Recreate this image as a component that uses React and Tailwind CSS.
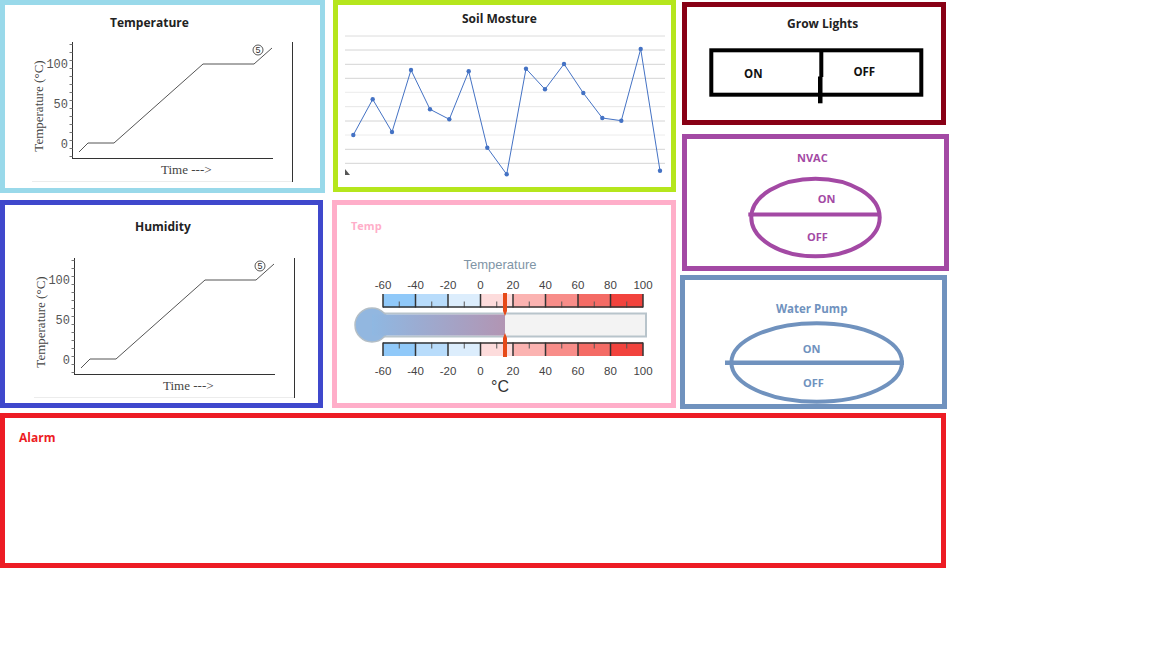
const soilPoints = [
  [353.3, 135], [372.7, 99.3], [392, 132], [411, 70], [430, 109.3], [449.3, 119.3],
  [468.7, 71.3], [487.3, 147.7], [506.7, 174.3], [526, 68.7], [545, 89.3], [564, 64],
  [583.3, 93], [602.3, 118], [621.3, 120.7], [640.7, 49], [660, 170.7],
];

const gridLines = [
  [36, "#dcdcdc"], [50, "#d4d4d4"], [64.3, "#d4d4d4"], [78.3, "#d4d4d4"], [92.3, "#ececec"],
  [106.7, "#e6e6e6"], [121, "#d4d4d4"], [135, "#ececec"], [149.3, "#d4d4d4"], [163.3, "#d4d4d4"],
];

const scaleColors = ["#90c9f9", "#b8dcfb", "#dcedfc", "#fddcdc", "#fbb3b1", "#f88d89", "#f46b65", "#f2433d"];
const scaleLabels = ["-60", "-40", "-20", "0", "20", "40", "60", "80", "100"];

// the same phase-change chart is used in both left panels
function CurveChart() {
  const ticks = [];
  for (let y = 44; y <= 156; y += 8) ticks.push(y);
  return (
    <g>
      <line x1="32" y1="181.5" x2="292" y2="181.5" stroke="#ececec" />
      <line x1="72.5" y1="42" x2="72.5" y2="159" stroke="#333" />
      <line x1="72" y1="158.5" x2="273" y2="158.5" stroke="#333" />
      <line x1="292.5" y1="42" x2="292.5" y2="182" stroke="#333" />
      {ticks.map((y) => (
        <line key={y} x1="69.5" y1={y + 0.5} x2="72.5" y2={y + 0.5} stroke="#777" />
      ))}
      <g fontFamily="'Liberation Mono', monospace" fontSize="12" fill="#555" textAnchor="end">
        <text x="68" y="68">100</text>
        <text x="68" y="107.5">50</text>
        <text x="68" y="148">0</text>
      </g>
      <text
        x="38"
        y="106"
        transform="rotate(-90 38 106)"
        textAnchor="middle"
        dominantBaseline="central"
        fontFamily="'Liberation Serif', serif"
        fontSize="13"
        fill="#444"
      >
        Temperature (°C)
      </text>
      <text x="161" y="174" fontFamily="'Liberation Serif', serif" fontSize="13" fill="#444">
        Time ---&gt;
      </text>
      <polyline
        points="79,152 88,143 114,143 203,64 254,64 272,48"
        fill="none"
        stroke="#555"
        strokeWidth="1"
      />
      <circle cx="258" cy="50" r="5" fill="white" stroke="#444" strokeWidth="0.9" />
      <text x="258" y="53.2" textAnchor="middle" fontFamily="'Liberation Sans', sans-serif" fontSize="9" fill="#333">
        5
      </text>
    </g>
  );
}

function SoilChart() {
  return (
    <g>
      {gridLines.map(([y, c]) => (
        <line key={y} x1="345" y1={y} x2="665" y2={y} stroke={c} strokeWidth="1" />
      ))}
      <polygon points="345,169 350,175 345,175" fill="#555" />
      <polyline
        points={soilPoints.map((p) => p.join(",")).join(" ")}
        fill="none"
        stroke="#4472c4"
        strokeWidth="1"
      />
      {soilPoints.map(([x, y]) => (
        <circle key={x} cx={x} cy={y} r="2.2" fill="#4472c4" />
      ))}
    </g>
  );
}

function ScaleBar({ y, ticksFromTop }) {
  const h = 13.5;
  return (
    <g>
      {scaleColors.map((c, i) => (
        <rect key={c} x={383 + i * 32.5} y={y} width="32.5" height={h} fill={c} />
      ))}
      {scaleLabels.map((l, i) => (
        <line key={l} x1={383 + i * 32.5} y1={y} x2={383 + i * 32.5} y2={y + h} stroke="#333" strokeWidth="1.5" />
      ))}
      {scaleColors.map((c, i) => (
        <line
          key={"m" + c}
          x1={399.25 + i * 32.5}
          y1={ticksFromTop ? y : y + h - 6}
          x2={399.25 + i * 32.5}
          y2={ticksFromTop ? y + 6 : y + h}
          stroke="#555"
          strokeWidth="1"
        />
      ))}
      <line
        x1="383"
        y1={ticksFromTop ? y + 0.5 : y + h - 0.5}
        x2="643"
        y2={ticksFromTop ? y + 0.5 : y + h - 0.5}
        stroke="#333"
        strokeWidth="1.5"
      />
    </g>
  );
}

function Thermometer() {
  return (
    <g>
      <defs>
        <linearGradient id="fill" x1="0" x2="1" y1="0" y2="0">
          <stop offset="0" stopColor="#8fb8e2" />
          <stop offset="1" stopColor="#b295b3" />
        </linearGradient>
      </defs>
      <text x="500" y="268.5" textAnchor="middle" fontFamily="'Liberation Sans', sans-serif" fontSize="13" fill="#7f95a6">
        Temperature
      </text>
      <g fontFamily="'Liberation Sans', sans-serif" fontSize="11.5" fill="#444" textAnchor="middle">
        {scaleLabels.map((l, i) => (
          <text key={l} x={383 + i * 32.5} y="288.5">{l}</text>
        ))}
        {scaleLabels.map((l, i) => (
          <text key={"b" + l} x={383 + i * 32.5} y="374.5">{l}</text>
        ))}
      </g>
      <ScaleBar y={294} ticksFromTop={false} />
      <ScaleBar y={342.5} ticksFromTop />
      <rect x="372" y="313.5" width="274" height="23" fill="#f3f3f3" stroke="#b8c4cb" strokeWidth="2" />
      <circle cx="372" cy="325" r="17" fill="#92b7e0" stroke="#b3bec6" strokeWidth="1.5" />
      <rect x="372" y="314.5" width="133" height="21" fill="url(#fill)" />
      <polygon points="503,293 507,293 507,311 505,316 503,311" fill="#e64a19" />
      <polygon points="503,357 507,357 507,338 505,333 503,338" fill="#e64a19" />
      <text x="500" y="392" textAnchor="middle" fontFamily="'Liberation Sans', sans-serif" fontSize="16" fill="#333">
        °C
      </text>
    </g>
  );
}

function App() {
  return (
    <div className="w-[1152px] h-[648px] bg-white font-['Open_Sans',sans-serif]">
      <div className="flex items-start">
        {/* left column */}
        <div className="flex flex-col w-[325px]">
          <section className="w-[325px] h-[193px] border-[5px] border-[#99d9ea]">
            <h2 className="pt-[10px] pl-[105px] text-[12px] leading-[16px] font-bold text-[#222]">Temperature</h2>
            <svg className="block" width="315" height="157" viewBox="5 31 315 157">
              <CurveChart />
            </svg>
          </section>
          <section className="mt-[7px] w-[323px] h-[208px] border-[5px] border-[#3f48cc]">
            <h2 className="pt-[14px] pl-[130px] text-[12px] leading-[16px] font-bold text-[#222]">Humidity</h2>
            <svg className="block" width="313" height="168" viewBox="3 19 313 168">
              <CurveChart />
            </svg>
          </section>
        </div>

        {/* middle column */}
        <div className="ml-[8px] flex flex-col w-[343px]">
          <section className="w-[343px] h-[192px] border-[5px] border-[#b5e61d]">
            <h2 className="pt-[6px] pl-[124px] text-[12px] leading-[16px] font-bold text-[#222]">Soil Mosture</h2>
            <svg className="block" width="333" height="160" viewBox="338 27 333 160">
              <SoilChart />
            </svg>
          </section>
          <section className="mt-[8px] -ml-[1px] w-[344px] h-[208px] border-[5px] border-[#ffaec9]">
            <h2 className="pt-[13px] pl-[14px] mb-[20px] text-[11px] leading-[16px] font-bold text-[#ffaec9]">Temp</h2>
            <svg className="block" width="334" height="149" viewBox="337 254 334 149">
              <Thermometer />
            </svg>
          </section>
        </div>

        {/* right column */}
        <div className="ml-[5px] flex flex-col w-[268px]">
          <section className="mt-[2px] ml-[1px] w-[264px] h-[123px] border-[5px] border-[#880015]">
            <h2 className="pt-[9px] pl-[100px] text-[12px] leading-[16px] font-bold text-[#222]">Grow Lights</h2>
            <svg className="block" width="254" height="88" viewBox="687 32 254 88">
              <rect x="711.3" y="50.3" width="210" height="44.4" fill="none" stroke="#000" strokeWidth="4" />
              <rect x="819.3" y="49" width="4" height="28" fill="#000" />
              <rect x="818" y="76.5" width="4.5" height="26.8" fill="#000" />
              <g fontFamily="'Open Sans', sans-serif" fontWeight="700" fontSize="11.5" fill="#111" textAnchor="middle">
                <text x="753.3" y="77.5">ON</text>
                <text x="864.3" y="76">OFF</text>
              </g>
            </svg>
          </section>
          <section className="mt-[9px] ml-[1px] w-[267px] h-[137px] border-[5px] border-[#a349a4]">
            <h2 className="pt-[11px] pl-[110px] text-[11px] leading-[16px] font-bold text-[#a349a4]">NVAC</h2>
            <svg className="block" width="257" height="100" viewBox="687 166 257 100">
              <ellipse cx="815.5" cy="217.5" rx="64.2" ry="38.8" fill="none" stroke="#a349a4" strokeWidth="4" />
              <line x1="748.3" y1="214.5" x2="880" y2="214.5" stroke="#a349a4" strokeWidth="4" />
              <g fontFamily="'Open Sans', sans-serif" fontWeight="700" fontSize="11" fill="#a349a4" textAnchor="middle">
                <text x="826.7" y="203">ON</text>
                <text x="817.3" y="241.3">OFF</text>
              </g>
            </svg>
          </section>
          <section className="mt-[4px] -ml-[1px] w-[267px] h-[134px] border-[5px] border-[#7092be]">
            <h2 className="pt-[21px] pl-[91px] text-[11.5px] leading-[16px] font-bold text-[#7092be]">Water Pump</h2>
            <svg className="block" width="257" height="87" viewBox="685 317 257 87">
              <ellipse cx="816.7" cy="362.5" rx="85.3" ry="39.2" fill="none" stroke="#7092be" strokeWidth="4" />
              <line x1="725" y1="362.8" x2="904" y2="362.8" stroke="#7092be" strokeWidth="4.5" />
              <g fontFamily="'Open Sans', sans-serif" fontWeight="700" fontSize="11" fill="#7092be" textAnchor="middle">
                <text x="811.7" y="352.7">ON</text>
                <text x="813.3" y="387">OFF</text>
              </g>
            </svg>
          </section>
        </div>
      </div>

      <section className="mt-[4px] w-[946px] h-[155px] border-[5px] border-[#ed1c24]">
        <h2 className="pt-[12px] pl-[14px] text-[12px] leading-[16px] font-bold text-[#ed1c24]">Alarm</h2>
      </section>
    </div>
  );
}

export default App;
